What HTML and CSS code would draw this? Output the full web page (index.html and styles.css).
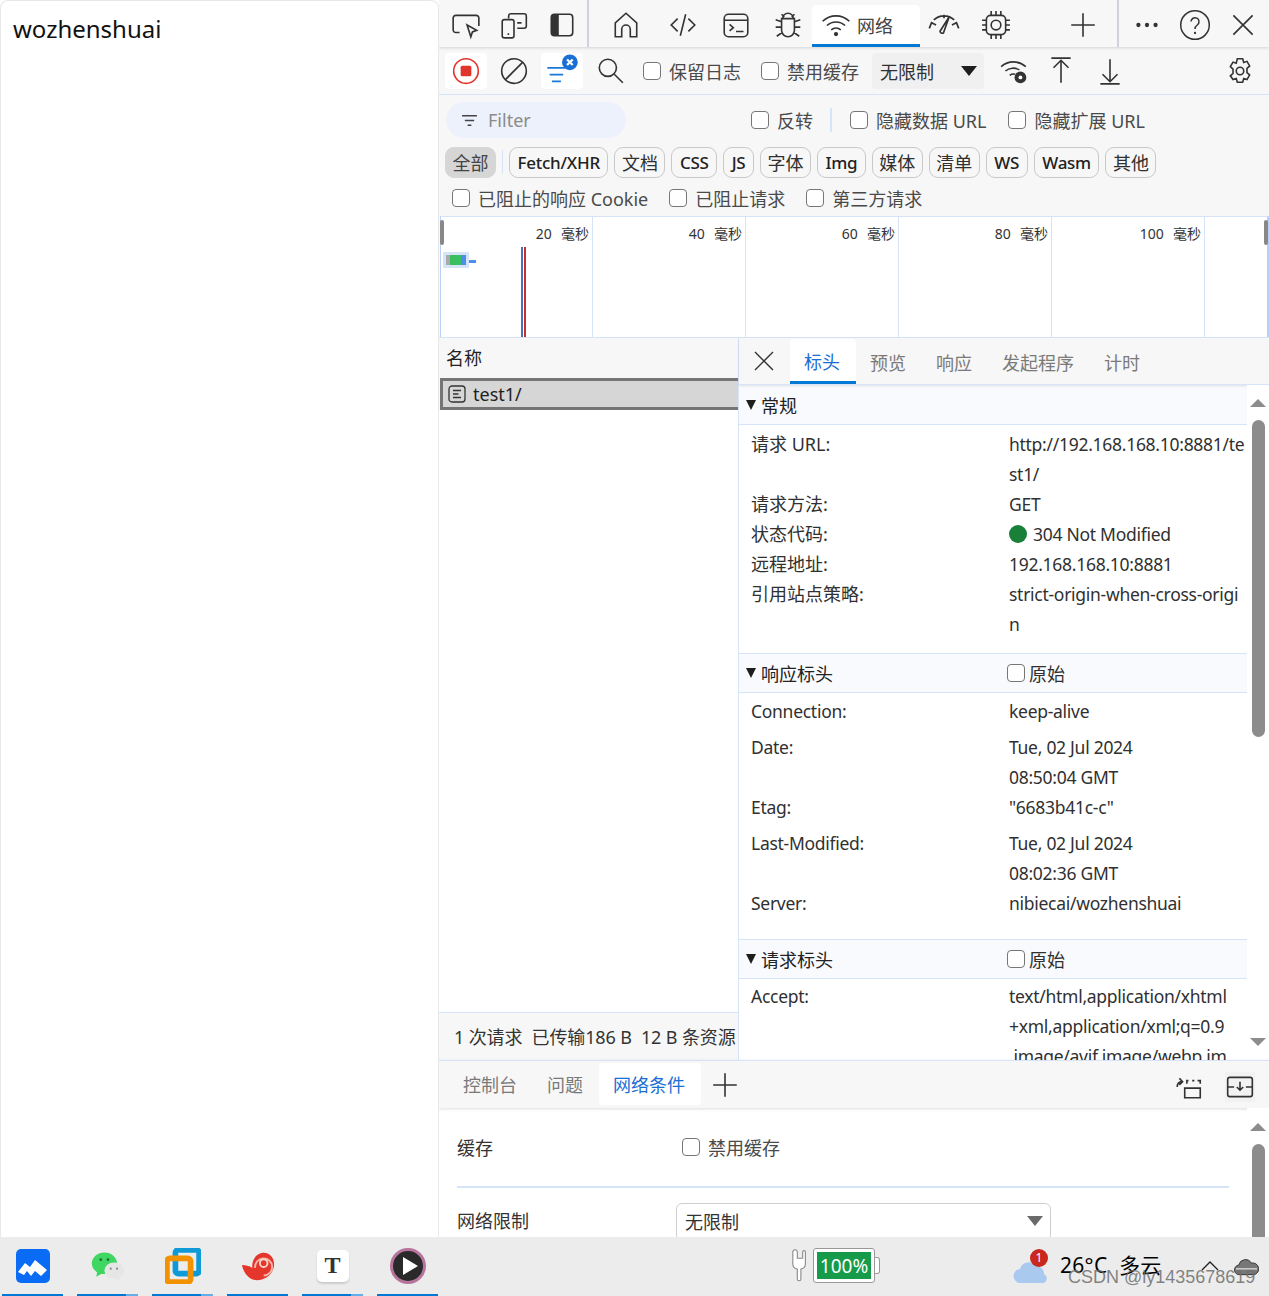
FILE: index.html
```html
<!DOCTYPE html>
<html lang="zh-CN">
<head>
<meta charset="utf-8">
<title>DevTools</title>
<link rel="stylesheet" href="styles.css">
</head>
<body>
<div class="main">
  <section class="page">wozhenshuai</section>
  <section class="devtools">
    <header class="bar1">
      <span class="slot ml4"><svg class="ic" viewBox="0 0 28 28"><path d="M8 21H4.500A2.500 2.500 0 0 1 2 18.500V7.500A2.500 2.500 0 0 1 4.500 5h19A2.500 2.500 0 0 1 26 7.500V15"/><path d="M15 14l9 5-4 1.500-1.500 4.500z"/></svg></span>
      <span class="slot"><svg class="ic" viewBox="0 0 28 28"><path d="M9 8V5.500A2 2 0 0 1 11 3.500h12.500a2 2 0 0 1 2 2V15a2 2 0 0 1-2 2H17"/><rect x="3" y="9" width="11" height="17" rx="2"/><path d="M8 22.500h1.500M17 12h4"/></svg></span>
      <span class="slot"><svg class="ic" viewBox="0 0 28 28"><rect x="4" y="4" width="20" height="20" rx="3"/><path class="solid" d="M7 4h4v20H7a3 3 0 0 1-3-3V7a3 3 0 0 1 3-3z"/></svg></span>
      <span class="sep1"></span>
      <span class="slot ml13"><svg class="ic" viewBox="0 0 28 28"><path d="M4 25V12L14 3l10 9v13h-6v-7a4 4 0 0 0-8 0v7z"/></svg></span>
      <span class="slot ml9"><svg class="ic" viewBox="0 0 28 28"><path d="M9 8l-6 6 6 6M19 8l6 6-6 6M16.500 4l-5 20"/></svg></span>
      <span class="slot ml5"><svg class="ic" viewBox="0 0 28 28"><rect x="3" y="4" width="22" height="21" rx="4"/><path d="M3 9.500h22M8 13.500l3.500 3-3.500 3M14 20h7"/></svg></span>
      <span class="slot ml4"><svg class="ic" viewBox="0 0 28 28"><path d="M8 8h12v11a6 6 0 0 1-12 0zM9 8a5 5 0 0 1 10 0M8 4l2.500 2.500M20 4l-2.500 2.500M8 11L2.500 9M20 11l5.500-2M8 16H2.500M20 16h5.500M8.500 21l-5 3.500M19.500 21l5 3.500"/></svg></span>
      <span class="net-tab"><svg class="ic wifi" viewBox="0 0 28 28"><path d="M1.500 10.500a18 18 0 0 1 25 0M5.500 14.500a12.500 12.500 0 0 1 17 0M9.500 18.500a7 7 0 0 1 9 0"/><circle class="solid" cx="14" cy="22.500" r="2"/></svg>网络</span>
      <span class="slot"><svg class="ic gauge" viewBox="0 0 30 28"><path d="M2 17l2-5 4 2M28 17l-2-5-4 2M6 9.500a13 13 0 0 1 18 0M15 5v3M19.500 7l-5 14a2 2 0 0 1-3-1.500z"/></svg></span>
      <span class="slot ml4"><svg class="ic" viewBox="0 0 28 28"><rect x="5" y="5" width="18" height="18" rx="4"/><circle cx="14" cy="14" r="4.500"/><path d="M9.500 1v4M14 1v4M18.500 1v4M9.500 23v4M14 23v4M18.500 23v4M1 9.500h4M1 14h4M1 18.500h4M23 9.500h4M23 14h4M23 18.500h4"/></svg></span>
      <span class="slot ml39"><svg class="ic" viewBox="0 0 28 28"><path d="M14 3v22M3 14h22"/></svg></span>
      <span class="sep1 far"></span>
      <span class="slot ml4"><svg class="ic" viewBox="0 0 28 28"><circle class="solid" cx="6" cy="14" r="2"/><circle class="solid" cx="14" cy="14" r="2"/><circle class="solid" cx="22" cy="14" r="2"/></svg></span>
      <span class="slot"><svg class="ic big" viewBox="0 0 28 28"><circle cx="14" cy="14" r="12.500"/><path d="M10.500 11a3.500 3.500 0 1 1 5.500 3c-1.500 1-2 1.500-2 3.500"/><circle class="solid" cx="14" cy="21" r="1"/></svg></span>
      <span class="slot"><svg class="ic" viewBox="0 0 28 28"><path d="M5 5l18 18M23 5L5 23"/></svg></span>
    </header>

    <div class="bar2">
      <span class="btn-white"><svg class="ic" viewBox="0 0 28 28"><circle class="red" cx="14" cy="14" r="11.500"/><rect class="redfill" x="9" y="9" width="10" height="10" rx="1.500"/></svg></span>
      <span class="slot narrow ml9"><svg class="ic" viewBox="0 0 28 28"><circle cx="14" cy="14" r="11.500"/><path d="M6 22L22 6"/></svg></span>
      <span class="btn-white ml9"><svg class="ic filt" viewBox="0 0 32 28"><path d="M3 13h16M5 19h12M7 25h8"/><circle class="bluefill" cx="23" cy="8" r="7"/><path class="wh" d="M20.500 5.500l5 5M25.500 5.500l-5 5"/></svg></span>
      <span class="slot narrow ml9"><svg class="ic" viewBox="0 0 28 28"><circle cx="12" cy="11" r="8"/><path d="M18 17l8 8"/></svg></span>
      <label class="chk ml15"><input type="checkbox">保留日志</label>
      <label class="chk ml20"><input type="checkbox">禁用缓存</label>
      <span class="throttle">无限制<i class="tri"></i></span>
      <span class="slot narrow ml12"><svg class="ic" viewBox="0 0 28 28"><path d="M2 10a17 17 0 0 1 23 0M6 14a11 11 0 0 1 13-1M10 18a6 6 0 0 1 5-1"/><circle class="solid" cx="20" cy="20" r="5.500"/><circle class="wh-fill" cx="20" cy="20" r="1.800"/></svg></span>
      <span class="slot narrow ml11"><svg class="ic" viewBox="0 0 28 28"><path d="M5 2h18M14 25V4M7 11l7-7 7 7"/></svg></span>
      <span class="slot narrow ml13"><svg class="ic" viewBox="0 0 28 28"><path d="M14 3v21M7 17l7 7 7-7M5 26h18"/></svg></span>
      <span class="slot narrow ml-auto"><svg class="ic" viewBox="0 0 28 28"><path d="M11.500 2.500h5l1 3.500 3-1 2.500 4.300-2.500 2.200v4l2.500 2.200-2.500 4.300-3-1-1 3.500h-5l-1-3.500-3 1L5 18.500l2.500-2.200v-4L5 10l2.500-4.300 3 1z"/><circle cx="14" cy="14" r="3.500"/></svg></span>
    </div>

    <div class="filter-row">
      <span class="filter-box"><svg class="fi" viewBox="0 0 18 14"><path d="M1 2h16M4 7h10M7 12h4"/></svg>Filter</span>
      <label class="chk ml125"><input type="checkbox">反转</label>
      <span class="sep2"></span>
      <label class="chk"><input type="checkbox">隐藏数据 URL</label>
      <label class="chk ml22"><input type="checkbox">隐藏扩展 URL</label>
    </div>

    <div class="chips">
      <span class="chip on">全部</span>
      <span class="sep3"></span>
      <span class="chip lat">Fetch/XHR</span>
      <span class="chip">文档</span>
      <span class="chip lat">CSS</span>
      <span class="chip lat">JS</span>
      <span class="chip">字体</span>
      <span class="chip lat">Img</span>
      <span class="chip">媒体</span>
      <span class="chip">清单</span>
      <span class="chip lat">WS</span>
      <span class="chip lat">Wasm</span>
      <span class="chip">其他</span>
    </div>

    <div class="check-row">
      <label class="chk"><input type="checkbox">已阻止的响应 Cookie</label>
      <label class="chk"><input type="checkbox">已阻止请求</label>
      <label class="chk"><input type="checkbox">第三方请求</label>
    </div>

    <div class="overview">
      <div class="tick">20&nbsp; 毫秒</div>
      <div class="tick">40&nbsp; 毫秒</div>
      <div class="tick">60&nbsp; 毫秒</div>
      <div class="tick">80&nbsp; 毫秒</div>
      <div class="tick">100&nbsp; 毫秒</div>
      <div class="tick last"></div>
      <i class="handle hl"></i><i class="handle hr"></i>
      <i class="mark mblue"></i><i class="mark mred"></i>
      <i class="req"><b class="g1"></b><b class="g2"></b><b class="g3"></b></i><i class="dash"></i>
    </div>

    <div class="split">
      <div class="names">
        <div class="names-head">名称</div>
        <div class="sel"><svg class="doc" viewBox="0 0 18 18"><rect x="1" y="1" width="16" height="16" rx="3"/><path d="M5 5.500h8M5 9h5.500M5 12.500h8"/></svg>test1/</div>
        <div class="names-empty"></div>
        <div class="status">1 次请求&nbsp;&nbsp;已传输186 B&nbsp;&nbsp;12 B 条资源</div>
      </div>
      <div class="details">
        <div class="dtabs">
          <span class="dclose"><svg class="ic" viewBox="0 0 28 28"><path d="M5 5l18 18M23 5L5 23"/></svg></span>
          <span class="dtab active">标头</span>
          <span class="dtab">预览</span>
          <span class="dtab">响应</span>
          <span class="dtab">发起程序</span>
          <span class="dtab">计时</span>
        </div>
        <div class="dbody">
          <div class="scroll">
            <div class="sec first"><span class="arrow"></span>常规</div>
            <div class="rows r1">
              <div class="row"><span>请求 URL:</span><span class="v">http://192.168.168.10:8881/te<br>st1/</span></div>
              <div class="row"><span>请求方法:</span><span class="v">GET</span></div>
              <div class="row"><span>状态代码:</span><span class="v"><i class="dot"></i>304 Not Modified</span></div>
              <div class="row"><span>远程地址:</span><span class="v">192.168.168.10:8881</span></div>
              <div class="row"><span>引用站点策略:</span><span class="v">strict-origin-when-cross-origi<br>n</span></div>
            </div>
            <div class="sec"><span class="arrow"></span><span class="sec-name">响应标头</span><label class="chk raw"><input type="checkbox">原始</label></div>
            <div class="rows r2">
              <div class="row pad"><span class="v">Connection:</span><span class="v">keep-alive</span></div>
              <div class="row"><span class="v">Date:</span><span class="v">Tue, 02 Jul 2024<br>08:50:04 GMT</span></div>
              <div class="row pad"><span class="v">Etag:</span><span class="v">"6683b41c-c"</span></div>
              <div class="row"><span class="v">Last-Modified:</span><span class="v">Tue, 02 Jul 2024<br>08:02:36 GMT</span></div>
              <div class="row"><span class="v">Server:</span><span class="v">nibiecai/wozhenshuai</span></div>
            </div>
            <div class="sec"><span class="arrow"></span><span class="sec-name">请求标头</span><label class="chk raw"><input type="checkbox">原始</label></div>
            <div class="rows r3">
              <div class="row"><span class="v">Accept:</span><span class="v">text/html,application/xhtml<br>+xml,application/xml;q=0.9<br>,image/avif,image/webp,im</span></div>
            </div>
          </div>
          <div class="sbar">
            <i class="up"></i>
            <i class="thumb t1"></i>
            <i class="down"></i>
          </div>
        </div>
      </div>
    </div>

    <div class="drawer-tabs">
      <span class="dwt">控制台</span>
      <span class="dwt">问题</span>
      <span class="dwt active">网络条件</span>
      <span class="slot narrow plus"><svg class="ic" viewBox="0 0 28 28"><path d="M14 3v22M3 14h22"/></svg></span>
      <span class="slot narrow ml-auto low"><svg class="ic" viewBox="0 0 28 28"><path d="M12 11V8h1.500M17 8h2M22 8h2.500v3M12 15h12.500v9H10v-9zM3 14a5 5 0 0 1 4-5M5 6l3 3-3 3"/></svg></span>
      <span class="dock low"><svg class="ic" viewBox="0 0 28 28"><rect x="2.500" y="5" width="23" height="18" rx="2"/><path d="M2.500 14h6M19.500 14h6M14 9v8M11 14l3 3 3-3"/></svg></span>
    </div>

    <div class="drawer">
      <div class="dw-main">
        <div class="dw-row cache"><span class="dw-label">缓存</span><label class="chk"><input type="checkbox">禁用缓存</label></div>
        <div class="dw-row"><span class="dw-label">网络限制</span><span class="select">无限制<i class="tri gray"></i></span></div>
      </div>
      <div class="sbar sbar2"><i class="up"></i><i class="thumb t2"></i></div>
    </div>
  </section>
</div>

<footer class="taskbar">
  <div class="apps">
    <span class="app"><svg class="ai" viewBox="0 0 36 36"><rect x="1" y="1" width="34" height="34" rx="5" fill="#0a6cf5"/><path d="M3 24l7-9 5 4 5-7 12 10-6 6-6-5-4 5-4-5-3 4z" fill="#fff"/></svg></span>
    <span class="app half"><svg class="ai" viewBox="0 0 40 36"><ellipse cx="16" cy="15" rx="14" ry="12" fill="#3fd662"/><path d="M8 24l-1 6 7-4z" fill="#3fd662"/><circle cx="12" cy="11" r="1.500" fill="#1b6b30"/><circle cx="20" cy="11" r="1.500" fill="#1b6b30"/><ellipse cx="27" cy="23" rx="11" ry="9" fill="#e6e6e6"/><path d="M31 30l3 5-7-3z" fill="#e6e6e6"/><circle cx="23" cy="21" r="1.200" fill="#888"/><circle cx="30" cy="21" r="1.200" fill="#888"/></svg></span>
    <span class="app half"><svg class="ai" viewBox="0 0 38 38"><rect x="11" y="2" width="25" height="25" rx="3" fill="none" stroke="#0e9ad7" stroke-width="6"/><rect x="2" y="11" width="25" height="25" rx="3" fill="none" stroke="#f39200" stroke-width="6"/></svg></span>
    <span class="app"><svg class="ai" viewBox="0 0 38 36"><path d="M2 17c4 0 8 1 11 3-1-9 5-16 12-16 6 0 11 5 11 12 0 10-9 17-18 17C10 33 4 26 2 17z" fill="#e5362c"/><path d="M16 20a9 9 0 1 1 9 8" fill="none" stroke="#f7b7a7" stroke-width="2"/><circle cx="25" cy="15" r="4" fill="none" stroke="#f7d7cc" stroke-width="2"/></svg></span>
    <span class="app half"><span class="t-ico">T</span></span>
    <span class="app"><svg class="ai" viewBox="0 0 36 36"><circle cx="18" cy="18" r="16.500" fill="#2a2a2a" stroke="#b7749c" stroke-width="3"/><path d="M13 9l15 9-15 9z" fill="#fff"/></svg></span>
  </div>
  <div class="tray">
    <svg class="plug" viewBox="0 0 20 36"><path d="M2 3v13a6 6 0 0 0 5 6v11a1.500 1.500 0 0 0 4 0V22a6 6 0 0 0 5-6V3a1.500 1.500 0 0 0-3 0v7H7V3a1.500 1.500 0 0 0-5 0z" fill="#fff" stroke="#888" stroke-width="1.200"/></svg>
    <span class="batt"><span class="batt-in">100%</span><i class="batt-tip"></i></span>
    <span class="weather"><svg class="cloud" viewBox="0 0 38 26"><path d="M8 25a7 7 0 0 1-1-14 9 9 0 0 1 16-3 8 8 0 0 1 8 8 5 5 0 0 1 0 9z" fill="#a9c9ef"/></svg><b class="notif">1</b></span>
    <span class="temp">26°C&nbsp; 多云</span>
    <svg class="caret" viewBox="0 0 18 10"><path d="M1 9l8-8 8 8"/></svg>
    <svg class="cloud2" viewBox="0 0 26 20"><path d="M6 19a5 5 0 0 1-1-10 7 7 0 0 1 13-2 6 6 0 0 1 3 12z" fill="#777" stroke="#333"/><path d="M2 13h22" stroke="#fff"/></svg>
  </div>
  <span class="watermark">CSDN @ly1435678619</span>
</footer>
</body>
</html>
```

FILE: styles.css
```css
* { box-sizing: border-box; }
html, body { margin: 0; padding: 0; }
body {
  width: 1269px;
  height: 1296px;
  overflow: hidden;
  position: relative;
  display: flex;
  flex-direction: column;
  font-family: "Noto Sans", "Noto Sans CJK SC", sans-serif;
  font-size: 18px;
  color: #303030;
  background: #fff;
}
.main { display: flex; height: 1237px; }
.page {
  width: 439px;
  padding: 9px 12px;
  font-size: 24px;
  line-height: 38px;
  color: #111;
  background: #fff;
  border: 1px solid #e8e8e8;
  border-bottom: 0;
  border-radius: 8px 8px 0 0;
}
.devtools {
  width: 830px;
  display: flex;
  flex-direction: column;
  background: #f7f7f7;
  overflow: hidden;
}

/* icons */
.ic { width: 30px; height: 30px; fill: none; stroke: #333; stroke-width: 1.500; display: block; }
.ic.big { width: 32px; height: 32px; stroke-width: 1.300; }
.ic.gauge { width: 34px; height: 32px; }
.solid { fill: #333; stroke: none; }
.red { stroke: #e0352b; }
.redfill { fill: #e0352b; stroke: none; }
.bluefill { fill: #1a6fd4; stroke: none; }
.wh { stroke: #fff; stroke-width: 2; }
.wh-fill { fill: #fff; stroke: none; }
.filt path:first-child { stroke: #1a78d8; }
.ic.filt { width: 36px; height: 32px; margin-top: -4px; }
.slot { width: 48px; height: 48px; display: flex; align-items: center; justify-content: center; flex: none; }
.slot.narrow { width: 36px; height: 36px; }
.ml4 { margin-left: 4px; }
.ml5 { margin-left: 5px; }
.ml9 { margin-left: 9px; }
.ml11 { margin-left: 11px; }
.ml12 { margin-left: 12px; }
.ml13 { margin-left: 13px; }
.ml15 { margin-left: 15px; }
.ml20 { margin-left: 20px; }
.ml22 { margin-left: 22px; }
.ml39 { margin-left: 39px; }
.ml125 { margin-left: 125px; }
.ml-auto { margin-left: auto; }

/* top toolbar */
.bar1 {
  height: 47px;
  flex: none;
  display: flex;
  align-items: center;
  background: #f7f7f7;
  box-shadow: 0 1px 3px rgba(0, 0, 0, .14);
  position: relative;
}
.bar1 .slot { margin-top: 3px; }
.bar1 .ml4:first-child { margin-left: 3px; }
.sep1 { width: 2px; height: 47px; background: #cfd2dc; flex: none; margin-left: 1px; }
.sep1.far { margin-left: 10px; }
.net-tab {
  width: 108px;
  height: 42px;
  margin-top: 5px;
  padding-left: 9px;
  flex: none;
  display: flex;
  align-items: center;
  gap: 6px;
  background: #fff;
  border-radius: 5px 5px 0 0;
  border-bottom: 3px solid #0078d4;
  color: #444;
}

/* second toolbar */
.bar2 {
  height: 48px;
  flex: none;
  display: flex;
  align-items: center;
  padding: 0 11px 0 6px;
  border-bottom: 1px solid #d6e4fa;
}
.btn-white {
  width: 42px;
  height: 36px;
  flex: none;
  display: flex;
  align-items: center;
  justify-content: center;
  background: #fff;
  border-radius: 4px;
}
.chk { display: inline-flex; align-items: center; gap: 8px; color: #4a4a4a; white-space: nowrap; flex: none; }
.chk input {
  appearance: none;
  width: 18px;
  height: 18px;
  margin: 0;
  background: #fff;
  border: 1.500px solid #767676;
  border-radius: 4px;
  flex: none;
}
.throttle {
  width: 112px;
  height: 36px;
  margin-left: 13px;
  padding: 0 7px 0 8px;
  display: flex;
  align-items: center;
  justify-content: space-between;
  background: #f0f0f0;
  border-radius: 4px;
  flex: none;
}
.tri { width: 0; height: 0; border: 8px solid transparent; border-top: 10px solid #1e1e1e; border-bottom: 0; }
.tri.gray { border-top-color: #6a6a6a; }

/* filter row */
.filter-row { height: 50px; flex: none; display: flex; align-items: center; padding-left: 7px; }
.filter-box {
  width: 180px;
  height: 36px;
  padding-left: 15px;
  display: flex;
  align-items: center;
  gap: 10px;
  background: #ecf1fb;
  border-radius: 18px;
  color: #8a8a8a;
  flex: none;
}
.fi { width: 17px; height: 13px; fill: none; stroke: #444; stroke-width: 1.600; }
.sep2 { width: 2px; height: 24px; margin: 0 18px 0 17px; background: #d6e4fa; flex: none; }

/* chips */
.chips { height: 32px; flex: none; display: flex; align-items: center; gap: 6px; padding-left: 6px; margin-top: 1px; }
.chip {
  height: 31px;
  padding: 0 6.500px;
  display: flex;
  align-items: center;
  border: 1px solid #c9c9c9;
  border-radius: 9px;
  white-space: nowrap;
  flex: none;
}
.chip.lat { padding: 0 7.500px; font-size: 17px; font-weight: 500; letter-spacing: -.25px; color: #222; }
.chip.on { background: #d6d6d6; border-color: #d6d6d6; color: #444; }
.sep3 { width: 1px; height: 24px; background: #d6e4fa; flex: none; }

.check-row { height: 38px; flex: none; display: flex; align-items: center; gap: 21px; padding: 2px 0 0 13px; }

/* overview */
.overview {
  height: 121px;
  flex: none;
  display: grid;
  grid-template-columns: 152px repeat(4, 153px) 1fr;
  position: relative;
  margin-left: 1px;
  background: #fff;
  border-top: 1px solid #d6e4fa;
  border-left: 1px solid #b8d0f5;
  border-right: 2px solid #b8d0f5;
}
.tick {
  padding: 7px 3px 0 0;
  border-right: 1px solid #d6e4fa;
  text-align: right;
  font-size: 14px;
  line-height: 20px;
  word-spacing: 1px;
  color: #333;
}
.tick.last { border-right: 0; }
.handle { position: absolute; top: 3px; width: 4px; height: 25px; background: #888; border-radius: 2px; }
.hl { left: -1px; }
.hr { right: -1px; }
.mark { position: absolute; top: 30px; bottom: 0; width: 2px; }
.mblue { left: 80px; background: #4472c4; }
.mred { left: 83px; background: #c8302a; }
.req { position: absolute; left: 2px; top: 35px; width: 26px; height: 16px; padding: 3px; display: flex; background: #d6e4fa; }
.req b { display: block; height: 100%; }
.g1 { width: 4px; background: #aaa; }
.g2 { width: 11px; background: #38c060; }
.g3 { width: 5px; background: #4a90e8; }
.dash { position: absolute; left: 28px; top: 43px; width: 7px; height: 3px; background: #4a90f0; }

/* split */
.split { flex: 1; min-height: 0; display: flex; border-top: 1px solid #d6e4fa; }
.names { width: 300px; flex: none; display: flex; flex-direction: column; border-right: 1px solid #d6e4fa; }
.names-head { height: 40px; flex: none; display: flex; align-items: center; padding: 0 0 2px 7px; color: #222; }
.sel {
  height: 32px;
  flex: none;
  margin-left: 1px;
  display: flex;
  align-items: center;
  gap: 7px;
  padding-left: 5px;
  background: #d6d6d6;
  border: 3.500px solid #757575;
  border-right: 0;
  color: #222;
}
.doc { width: 18px; height: 18px; fill: none; stroke: #333; stroke-width: 1.300; flex: none; }
.names-empty { flex: 1; background: #fff; }
.status {
  height: 48px;
  flex: none;
  display: flex;
  align-items: center;
  padding: 0 0 2px 15px;
  border-top: 1px solid #d6e4fa;
  letter-spacing: -.12px;
  white-space: nowrap;
  overflow: hidden;
  color: #333;
}
.details { flex: 1; min-width: 0; display: flex; flex-direction: column; background: #fff; }
.dtabs {
  height: 47px;
  flex: none;
  display: flex;
  align-items: flex-end;
  background: #f7f7f7;
  box-shadow: 0 1px 2px rgba(0, 0, 0, .12);
  position: relative;
  border-bottom: 1px solid #d6e4fa;
}
.dclose { width: 50px; height: 46px; display: flex; align-items: center; justify-content: center; }
.dclose .ic { width: 28px; height: 28px; stroke-width: 1.400; }
.dtab { height: 45px; padding: 0 15px; display: flex; align-items: center; color: #7a7a7a; flex: none; }
.dtab.active { margin: 0 -1px 0 1px; padding: 2px 16px 0 14px; background: #fff; color: #1a6fd4; border-bottom: 3px solid #0078d4; border-radius: 4px 4px 0 0; }
.dbody { flex: 1; min-height: 0; display: flex; }
.scroll { width: 508px; flex: none; overflow: hidden; padding-top: 1px; }
.sec {
  height: 40px;
  display: flex;
  align-items: center;
  padding-left: 7px;
  background: #f9fafe;
  border-top: 1px solid #d6e4fa;
  border-bottom: 1px solid #d6e4fa;
  color: #222;
}
.sec.first { border-top: 0; height: 39px; }
.arrow { width: 0; height: 0; border: 5.500px solid transparent; border-top: 10px solid #1e1e1e; border-bottom: 0; margin-right: 5px; }
.sec-name { width: 246px; }
.raw { gap: 4px; color: #303030; }
.rows { padding: 4px 0 14px; }
.rows.r2 { padding: 3px 0 21px; }
.rows.r3 { padding: 2px 0 0; }
.row { display: grid; grid-template-columns: 258px 1fr; padding-left: 12px; line-height: 30px; white-space: nowrap; }
.row .v { font-size: 17.500px; letter-spacing: -.28px; }
.row.pad { padding-bottom: 6px; }
.dot { display: inline-block; width: 18px; height: 18px; margin-right: 6px; border-radius: 50%; background: #188038; vertical-align: -2px; }
.sbar { width: 22px; flex: none; position: relative; display: flex; flex-direction: column; align-items: center; background: #fff; }
.up { width: 0; height: 0; margin-top: 14px; border: 8px solid transparent; border-bottom: 8px solid #8c8c8c; border-top: 0; }
.down { width: 0; height: 0; margin-top: auto; margin-bottom: 14px; border: 8px solid transparent; border-top: 8px solid #8c8c8c; border-bottom: 0; }
.thumb { width: 13px; margin-top: 13px; background: #8c8c8c; border-radius: 7px; }
.t1 { height: 317px; }
.t2 { flex: 1; border-radius: 7px 7px 0 0; }

/* drawer */
.drawer-tabs {
  height: 48px;
  flex: none;
  display: flex;
  align-items: center;
  padding: 0 14px 0 9px;
  border-top: 1px solid #d6e4fa;
  background: #f7f7f7;
  box-shadow: 0 1px 3px rgba(0, 0, 0, .14);
  position: relative;
}
.dwt { height: 42px; margin-bottom: 1px; padding: 0 15px; display: flex; align-items: center; color: #7a7a7a; flex: none; }
.dwt.active { background: #fff; color: #1a6fd4; border-radius: 4px; margin-left: 1px; padding: 0 16px 0 14px; }
.plus { margin-left: 6px; }
.dock { width: 30px; height: 30px; margin-left: 18px; display: flex; align-items: center; justify-content: center; background: #f2f2f2; flex: none; }
.low { margin-top: 4px; }
.drawer { height: 129px; flex: none; display: flex; background: #fff; overflow: hidden; }
.dw-main { width: 808px; flex: none; padding: 0 18px; }
.dw-row { display: grid; grid-template-columns: 219px 375px; align-items: center; }
.dw-label { color: #333; margin-top: 10px; }
.cache { height: 80px; border-bottom: 2px solid #d6e4fa; grid-template-columns: 225px 1fr; width: 772px; }
.cache .dw-label { margin-top: 0; }
.select {
  height: 38px;
  margin-top: 15px;
  padding: 0 7px 2px 8px;
  display: flex;
  align-items: center;
  justify-content: space-between;
  border: 1px solid #cfcfcf;
  border-radius: 6px;
  background: #fff;
  color: #333;
}
.sbar2 .up { margin-top: 15px; }

/* taskbar */
.taskbar {
  height: 59px;
  flex: none;
  display: flex;
  align-items: stretch;
  position: relative;
  background: #ececec;
}
.apps { display: flex; gap: 14px; padding-left: 2px; }
.app {
  width: 61px;
  display: flex;
  align-items: center;
  justify-content: center;
  border-bottom: 2px solid #0078d4;
  flex: none;
  position: relative;
}
.app.half::after { content: ""; position: absolute; right: 0; bottom: -2px; width: 12px; height: 2px; background: #66aee6; }
.ai { width: 36px; height: 36px; display: block; }
.t-ico {
  width: 32px;
  height: 32px;
  display: flex;
  align-items: center;
  justify-content: center;
  background: #fff;
  border-radius: 5px;
  box-shadow: 0 2px 2px #ccc;
  font-family: "Liberation Serif", serif;
  font-weight: 700;
  font-size: 24px;
  color: #333;
}
.tray { flex: 1; display: flex; align-items: center; padding-left: 353px; padding-bottom: 2px; }
.plug { width: 18px; height: 35px; flex: none; }
.batt {
  width: 62px;
  height: 35px;
  margin-left: 4px;
  padding: 3px;
  position: relative;
  background: #fff;
  border: 1px solid #999;
  border-radius: 3px;
  flex: none;
}
.batt-in { display: flex; height: 100%; align-items: center; justify-content: center; background: #169b4a; color: #fff; font-size: 19px; }
.batt-tip { position: absolute; right: -6px; top: 8px; width: 5px; height: 17px; background: #fff; border: 1px solid #999; border-left: 0; border-radius: 0 3px 3px 0; }
.weather { width: 38px; height: 36px; margin-left: 137px; position: relative; flex: none; }
.cloud { position: absolute; left: 0; bottom: 0; width: 40px; height: 26px; }
.notif { position: absolute; right: 2px; top: 1px; width: 18px; height: 18px; border-radius: 50%; background: #c8281e; color: #fff; font-size: 12px; font-weight: 400; line-height: 18px; text-align: center; }
.temp { margin: 0 0 3px 10px; font-size: 21px; letter-spacing: .3px; color: #000; white-space: nowrap; }
.caret { width: 18px; height: 10px; margin-left: 39px; fill: none; stroke: #222; stroke-width: 1.300; flex: none; }
.cloud2 { width: 25px; height: 20px; margin-left: 15px; flex: none; }
.watermark {
  position: absolute;
  left: 1068px;
  top: 29px;
  font-family: "Liberation Sans", sans-serif;
  font-size: 18px;
  line-height: 22px;
  color: rgba(110, 110, 110, .85);
  white-space: nowrap;
}
```
